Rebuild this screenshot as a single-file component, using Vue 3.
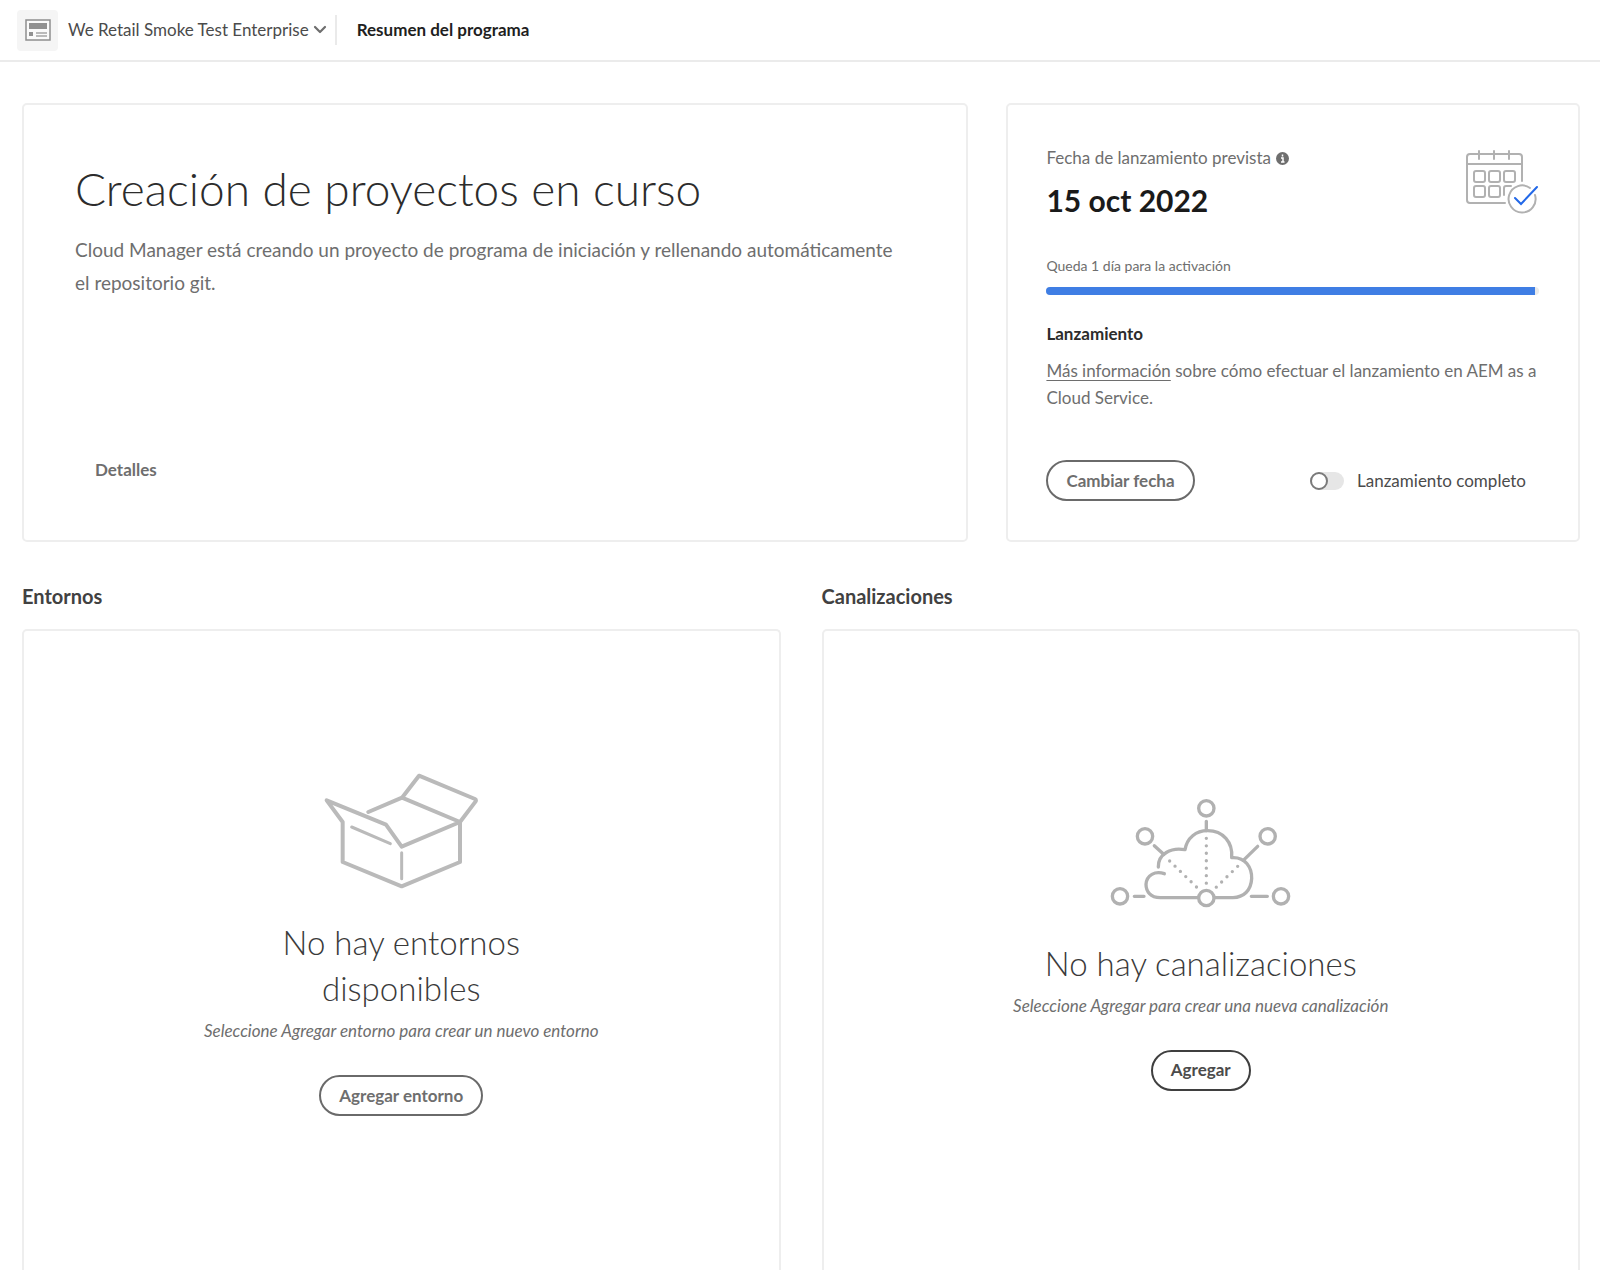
<script setup>
import { ref } from 'vue'

const program = ref('We Retail Smoke Test Enterprise')
const goLive = ref(false)
const elapsed = ref(99.2)
const nodes = [[87, 352], [162, 172], [346, 88], [530, 172], [570, 352], [346, 357]]
const days = [[9, 22], [24, 22], [39, 22], [9, 37], [24, 37]]
</script>

<template>
  <div class="page">
    <header class="bar">
      <span class="app-icon">
        <svg width="26" height="24" viewBox="0 0 26 24" aria-hidden="true">
          <rect x="1" y="2" width="24" height="20" fill="#fafafa" stroke="#8e8e8e" stroke-width="1.5" />
          <rect x="4" y="5" width="18" height="6" fill="#919191" />
          <rect x="4" y="14" width="4" height="4" fill="#919191" />
          <path d="M11 15h11M11 18h11" stroke="#a5a5a5" stroke-width="1.5" />
        </svg>
      </span>
      <button class="program" type="button">
        {{ program }}
        <svg width="14" height="10" viewBox="0 0 14 10" aria-hidden="true">
          <path d="M2 2l5 5 5-5" fill="none" stroke="#6e6e6e" stroke-width="2.2" stroke-linecap="round" stroke-linejoin="round" />
        </svg>
      </button>
      <h1 class="crumb">Resumen del programa</h1>
    </header>

    <main class="content">
      <div class="top">
        <section class="card hero">
          <h2>Creación de proyectos en curso</h2>
          <p>Cloud Manager está creando un proyecto de programa de iniciación y rellenando automáticamente el repositorio git.</p>
          <button class="quiet" type="button">Detalles</button>
        </section>

        <section class="card launch">
          <div class="launch-head">
            <div>
              <p class="label">
                Fecha de lanzamiento prevista
                <svg width="13" height="13" viewBox="0 0 26 26" aria-hidden="true">
                  <circle cx="13" cy="13" r="13" fill="#6e6e6e" />
                  <path d="M13 5v4M10 12h4v7M10 20h7" fill="none" stroke="#fff" stroke-width="3" />
                </svg>
              </p>
              <p class="date">15 oct 2022</p>
            </div>
            <svg width="74" height="66" viewBox="0 0 74 66" fill="none" stroke="#b1b1b1" stroke-width="2" stroke-linecap="round" aria-hidden="true">
              <path d="M57 32V8q0-3-3-3H5Q2 5 2 8v43q0 3 3 3h35M2 15h55M14 2v8M29 2v8M44 2v8" />
              <rect v-for="[x, y] in days" :key="`${x}-${y}`" :x="x" :y="y" width="11" height="11" rx="2" />
              <path d="M39 46v-7q0-2 2-2h5" />
              <path d="M65 39a13.5 13.5 0 1 0 5 7" />
              <path d="M50 49l6 6 16-17" stroke="#2268e8" />
            </svg>
          </div>

          <p id="remaining" class="remaining">Queda 1 día para la activación</p>
          <div class="track" role="progressbar" aria-labelledby="remaining" :aria-valuenow="elapsed">
            <div class="fill" :style="{ width: elapsed + '%' }"></div>
          </div>

          <h3>Lanzamiento</h3>
          <p class="info"><a href="#">Más información</a> sobre cómo efectuar el lanzamiento en AEM as a Cloud Service.</p>

          <div class="actions">
            <button class="pill" type="button">Cambiar fecha</button>
            <label class="switch" for="golive">
              <input id="golive" v-model="goLive" type="checkbox" />
              Lanzamiento completo
            </label>
          </div>
        </section>
      </div>

      <div class="bottom">
        <section class="column">
          <h2>Entornos</h2>
          <div class="card empty">
            <svg width="154" height="117" viewBox="72 66 462 351" fill="none" stroke="#bababa" stroke-width="12" stroke-linecap="round" stroke-linejoin="round" aria-hidden="true">
              <path d="M205 186l101-43 51-66 168 70q4 2 2 7l-47 62-175 74-47-66L80 151l48 65v120l177 73 175-73V216L306 143" />
              <path d="M155 231l116 50M305 308v78" stroke-width="9" />
            </svg>
            <h3>No hay entornos disponibles</h3>
            <p>Seleccione Agregar entorno para crear un nuevo entorno</p>
            <button class="pill" type="button">Agregar entorno</button>
          </div>
        </section>

        <section class="column">
          <h2>Canalizaciones</h2>
          <div class="card empty">
            <svg width="181" height="112" viewBox="57 57 543 336" fill="none" stroke="#b1b1b1" stroke-width="10" stroke-linecap="round" aria-hidden="true">
              <path d="M346 127v28M190 200l28 26M500 202l-43 42M130 352h29M481 352h48" />
              <path d="M202 264C201 225 240 204 282 212C288 176 315 155 350 155C396 155 426 190 422 236C464 233 483 267 482 299C480 335 458 355 426 356H208C178 356 165 337 165 316C167 288 192 275 220 284" stroke-linejoin="round" />
              <path d="M346 178V330M236 246l97 94M440 262l-80 78" stroke-dasharray="0 22.4" />
              <circle v-for="[x, y] in nodes" :key="`${x}-${y}`" :cx="x" :cy="y" r="23" fill="#fff" />
            </svg>
            <h3>No hay canalizaciones</h3>
            <p>Seleccione Agregar para crear una nueva canalización</p>
            <button class="pill dark" type="button">Agregar</button>
          </div>
        </section>
      </div>
    </main>
  </div>
</template>

<style>
body {
  margin: 0;
  background: #fff;
}
</style>

<style scoped>
.page {
  display: flex;
  flex-direction: column;
  min-height: 100vh;
  font-family: Lato, "Liberation Sans", sans-serif;
  font-size: 17px;
  line-height: 24px;
  color: #6e6e6e;
}

h1, h2, h3, p {
  margin: 0;
}

button {
  font: inherit;
  color: inherit;
  background: none;
  border: 0;
  padding: 0;
  cursor: pointer;
}

.bar {
  display: flex;
  align-items: center;
  height: 60px;
  padding-left: 17px;
  border-bottom: 2px solid #ebebeb;
}

.app-icon {
  display: flex;
  align-items: center;
  justify-content: center;
  width: 41px;
  height: 41px;
  margin-right: 10px;
  border-radius: 4px;
  background: #f5f5f5;
}

.program {
  display: flex;
  align-items: center;
  gap: 4px;
  padding-right: 8px;
  color: #4b4b4b;
}

.crumb {
  padding-left: 20px;
  border-left: 2px solid #eaeaea;
  font-size: 17px;
  line-height: 30px;
  font-weight: 700;
  color: #1f1f1f;
}

.content {
  display: flex;
  flex: 1;
  flex-direction: column;
  padding: 41px 20px 0 22px;
}

.card {
  box-sizing: border-box;
  border: 2px solid #eeeeee;
  border-radius: 5px;
}

.top {
  display: grid;
  grid-template-columns: 33fr 20fr;
  gap: 38px;
}

.hero {
  display: flex;
  flex-direction: column;
  align-items: flex-start;
  padding: 54px 60px 58px 51px;
}

.hero h2 {
  font-size: 46px;
  line-height: 60px;
  font-weight: 300;
  color: #2c2c2c;
}

.hero p {
  margin-top: 14px;
  font-size: 19px;
  line-height: 33px;
}

.quiet {
  margin: auto 0 0 20px;
  font-weight: 700;
}

.launch {
  padding: 41px 39px 39px 38px;
}

.launch-head {
  display: flex;
  justify-content: space-between;
}

.launch-head > svg {
  margin-top: 3px;
}

.label {
  display: flex;
  align-items: center;
  gap: 5px;
}

.date {
  margin-top: 10px;
  font-size: 30px;
  line-height: 40px;
  font-weight: 700;
  color: #1a1a1a;
}

.remaining {
  margin-top: 34px;
  font-size: 14px;
}

.track {
  height: 8px;
  margin-top: 9px;
  border-radius: 4px;
  background: #eaeaea;
  overflow: hidden;
}

.fill {
  height: 100%;
  background: #3f7ee4;
}

.launch h3 {
  margin-top: 27px;
  font-size: 17px;
  font-weight: 700;
  color: #2c2c2c;
}

.info {
  margin-top: 11px;
  line-height: 27px;
}

.info a {
  color: inherit;
  text-underline-offset: 3px;
}

.actions {
  display: flex;
  align-items: center;
  justify-content: space-between;
  margin-top: 49px;
  padding-right: 13px;
}

.pill {
  height: 41px;
  padding: 0 18px;
  border: 2px solid #6a6a6a;
  border-radius: 21px;
  font-weight: 700;
}

.dark {
  border-color: #3f3f3f;
  color: #4b4b4b;
}

.switch {
  display: flex;
  align-items: center;
  gap: 13px;
  color: #4b4b4b;
}

.switch input {
  appearance: none;
  width: 34px;
  height: 18px;
  margin: 0;
  border-radius: 9px;
  background: #e6e6e6;
}

.switch input::before {
  content: "";
  display: block;
  box-sizing: border-box;
  width: 18px;
  height: 18px;
  border: 2px solid #7a7a7a;
  border-radius: 50%;
  background: #fff;
}

.switch input:checked::before {
  margin-left: auto;
}

.bottom {
  display: grid;
  flex: 1;
  grid-template-columns: 1fr 1fr;
  gap: 41px;
  margin-top: 42px;
}

.column {
  display: flex;
  flex-direction: column;
}

.column h2 {
  font-size: 20px;
  line-height: 24px;
  font-weight: 700;
  color: #414141;
}

.empty {
  display: flex;
  flex: 1;
  flex-direction: column;
  align-items: center;
  justify-content: center;
  margin-top: 21px;
  padding: 24px 24px 37px;
  border-bottom: 0;
  border-radius: 5px 5px 0 0;
  text-align: center;
}

.empty h3 {
  max-width: 340px;
  margin-top: 30px;
  font-size: 33px;
  line-height: 46px;
  font-weight: 300;
  color: #3a3a3a;
}

.empty p {
  margin: 8px 0 32px;
  font-style: italic;
}
</style>
